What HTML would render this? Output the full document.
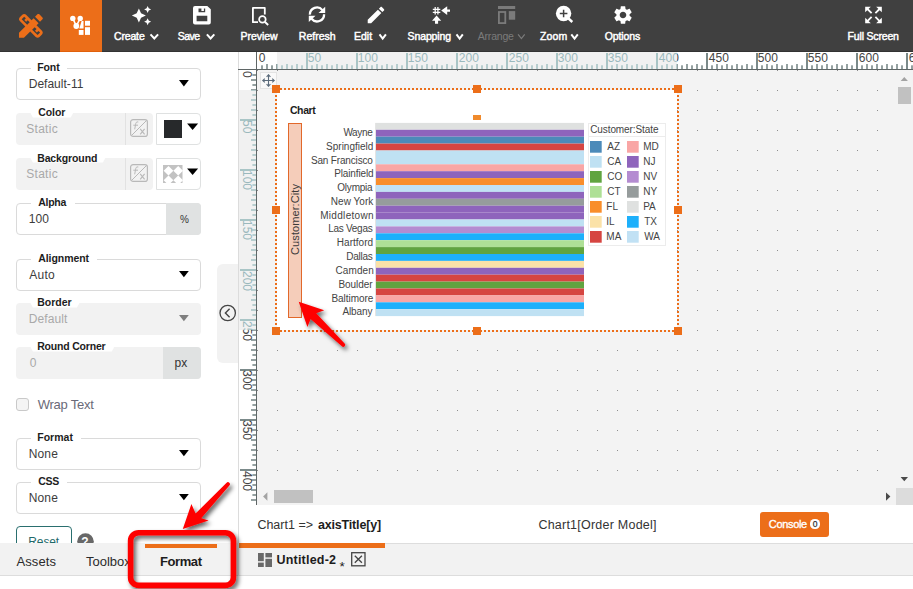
<!DOCTYPE html>
<html><head><meta charset="utf-8"><title>Format</title>
<style>
html,body{margin:0;padding:0;}
body{width:913px;height:589px;overflow:hidden;position:relative;background:#fff;font-family:"Liberation Sans", sans-serif;}
.t{position:absolute;white-space:pre;}
svg{position:absolute;overflow:visible;}
</style></head><body>
<div style="position:absolute;left:0px;top:0px;width:913px;height:51px;background:#404040;"></div>
<div style="position:absolute;left:60px;top:0px;width:42px;height:52px;background:#ec6e19;"></div>
<div style="position:absolute;left:0px;top:51px;width:238px;height:538px;background:#fff;"></div>
<div style="position:absolute;left:238px;top:51px;width:1px;height:493px;background:#dcdcdc;"></div>
<div style="position:absolute;left:239px;top:51px;width:674px;height:454px;background:#f3f3f3;"></div>
<div style="position:absolute;left:239px;top:505px;width:674px;height:38px;background:#fff;"></div>
<div style="position:absolute;left:0px;top:543px;width:913px;height:33px;background:#f2f2f2;"></div>
<div style="position:absolute;left:0px;top:575px;width:913px;height:1px;background:#dddddd;"></div>
<div style="position:absolute;left:239px;top:543px;width:674px;height:1px;background:#dddddd;"></div>
<div style="position:absolute;left:0px;top:576px;width:913px;height:13px;background:#fff;"></div>
<svg style="left:14.6px;top:10px" width="31.8" height="31.8" viewBox="0 0 24 24" ><path fill="#ec6e19" d="M16.24 11.51l1.57-1.57-3.75-3.75-1.57 1.57-4.14-4.13c-.78-.78-2.05-.78-2.83 0l-1.9 1.9c-.78.78-.78 2.05 0 2.83l4.13 4.13L3 17.25V21h3.75l4.76-4.76 4.13 4.13c.95.95 2.23.6 2.83 0l1.9-1.9c.78-.78.78-2.05 0-2.83l-4.13-4.13zm-7.06-.44L5.04 6.94l1.89-1.9L8.2 6.31 7.02 7.5l1.41 1.41 1.19-1.19 1.45 1.45-1.89 1.9zm7.88 7.89l-4.13-4.13 1.9-1.9 1.45 1.45-1.19 1.19 1.41 1.41 1.19-1.19 1.27 1.27-1.9 1.9zM20.71 7.04c.39-.39.39-1.02 0-1.41l-2.34-2.34c-.47-.47-1.12-.29-1.41 0l-1.83 1.83 3.75 3.75 1.83-1.83z"/></svg>
<svg style="left:60px;top:0px" width="42" height="52" viewBox="60 0 42 52" ><g fill="#fff" stroke="none">
<circle cx="72.8" cy="18.4" r="2.7"/><circle cx="80.2" cy="18.4" r="2.7"/><circle cx="76.3" cy="26" r="2.9"/>
<path d="M72.8 18.4 L76.3 26 L80.2 18.4" stroke="#fff" stroke-width="1.6" fill="none"/>
<rect x="85" y="20.8" width="5" height="4.9"/>
<rect x="85" y="27.2" width="5" height="7.7"/>
<rect x="78.8" y="30" width="4.7" height="4.9"/>
<path d="M81.6 21 h1.9 v7.6 h-4.2 z"/>
</g></svg>
<svg style="left:131.2px;top:4.6px" width="21" height="21" viewBox="0 0 24 24" ><path fill="#fff" d="M19 9l1.25-2.75L23 5l-2.75-1.25L19 1l-1.25 2.75L15 5l2.75 1.25L19 9zm-7.5.5L9 4 6.5 9.5 1 12l5.500 2.5L9 20l2.5-5.500L17 12l-5.500-2.500zM19 15l-1.250 2.750L15 19l2.750 1.250L19 23l1.250-2.750L23 19l-2.750-1.250L19 15z"/></svg>
<span class="t" style="left:114.00px;top:30px;font-size:10.5px;line-height:13px;color:#fff;letter-spacing:-0.160px;-webkit-text-stroke:0.45px #fff;">Create</span>
<svg style="left:0px;top:0px" width="913" height="52" viewBox="0 0 913 52" ><path d="M150.5 34.3 L154.3 38.5 L158.1 34.3" fill="none" stroke="#fff" stroke-width="2" stroke-linecap="butt"/></svg>
<svg style="left:192.7px;top:5.6px" width="17.8" height="18.4" viewBox="0 0 17.8 18.4" ><path fill="#fff" fill-rule="evenodd" d="M2 0 H14.3 L17.8 3.3 V16.4 Q17.8 18.4 15.8 18.4 H2 Q0 18.4 0 16.400 V2 Q0 0 2 0 Z M5.500 2.600 V6.200 H12.200 V2.600 H10.900 V5 H8.400 V2.600 Z M3.600 9.700 H14.300 V15.200 H3.600 Z"/></svg>
<span class="t" style="left:177.70px;top:30px;font-size:10.5px;line-height:13px;color:#fff;letter-spacing:-0.533px;-webkit-text-stroke:0.45px #fff;">Save</span>
<svg style="left:0px;top:0px" width="913" height="52" viewBox="0 0 913 52" ><path d="M206.9 34.3 L210.60000000000002 38.5 L214.3 34.3" fill="none" stroke="#fff" stroke-width="2" stroke-linecap="butt"/></svg>
<svg style="left:251.8px;top:6.8px" width="17" height="18.4" viewBox="0 0 17 18.4" ><path d="M6 15.2 H0.900 V0.900 H12.800 V7.500" fill="none" stroke="#fff" stroke-width="1.800" stroke-linejoin="round"/>
<circle cx="10.400" cy="12.400" r="3.300" fill="none" stroke="#fff" stroke-width="1.700"/>
<path d="M12.700 14.800 L16.200 18" stroke="#fff" stroke-width="1.900" fill="none"/></svg>
<span class="t" style="left:240.60px;top:30px;font-size:10.5px;line-height:13px;color:#fff;letter-spacing:-0.050px;-webkit-text-stroke:0.45px #fff;">Preview</span>
<svg style="left:302px;top:2px" width="30" height="26" viewBox="302 2 30 26" ><path d="M309.900 14.600 A7 7 0 0 1 322.400 10.100" fill="none" stroke="#fff" stroke-width="2.300"/><path d="M324.100 14.200 A7 7 0 0 1 311.600 18.700" fill="none" stroke="#fff" stroke-width="2.300"/><path fill="#fff" d="M325.200 6.700 V13 H318.500 Z M308.800 22.100 V15.800 H315.500 Z"/></svg>
<span class="t" style="left:298.80px;top:30px;font-size:10.5px;line-height:13px;color:#fff;letter-spacing:0.017px;-webkit-text-stroke:0.45px #fff;">Refresh</span>
<svg style="left:364.1px;top:2.9px" width="24" height="24" viewBox="0 0 24 24" ><path fill="#fff" transform="translate(12,12) scale(0.92) translate(-12,-12)" d="M3 17.250V21h3.750L17.810 9.940l-3.750-3.750L3 17.250zM20.710 7.040c.390-.390.390-1.020 0-1.410l-2.340-2.340c-.390-.390-1.020-.390-1.410 0l-1.830 1.830 3.750 3.750 1.830-1.830z"/></svg>
<span class="t" style="left:353.90px;top:30px;font-size:10.5px;line-height:13px;color:#fff;letter-spacing:0.033px;-webkit-text-stroke:0.45px #fff;">Edit</span>
<svg style="left:0px;top:0px" width="913" height="52" viewBox="0 0 913 52" ><path d="M379.5 34.3 L382.7 38.5 L385.9 34.3" fill="none" stroke="#fff" stroke-width="2" stroke-linecap="butt"/></svg>
<svg style="left:426px;top:0px" width="30" height="30" viewBox="426 0 30 30" ><path d="M435.200 6.900 V14.400 M437.900 6.900 V14.400 M432.800 9.400 H440.300 M432.800 12.400 H440.300" stroke="#fff" stroke-width="1.250" fill="none"/>
<path fill="#fff" d="M441.200 10.600 L447.200 6.200 V9.600 H450 V11.800 H447.200 V15 Z"/>
<path fill="#fff" d="M436.600 15.500 L441.200 20.700 H438.100 V23.800 H435 V20.700 H432 Z"/></svg>
<span class="t" style="left:407.50px;top:30px;font-size:10.5px;line-height:13px;color:#fff;letter-spacing:-0.100px;-webkit-text-stroke:0.45px #fff;">Snapping</span>
<svg style="left:0px;top:0px" width="913" height="52" viewBox="0 0 913 52" ><path d="M456.5 34.3 L459.65 38.5 L462.8 34.3" fill="none" stroke="#fff" stroke-width="2" stroke-linecap="butt"/></svg>
<svg style="left:497.9px;top:5.9px" width="17.2" height="18" viewBox="0 0 17.2 18" ><rect x="0" y="0" width="17.200" height="3" fill="#7b7b7b"/><rect x="0.900" y="6" width="6.400" height="11.100" fill="none" stroke="#7b7b7b" stroke-width="1.800"/><rect x="10.800" y="5.100" width="6.400" height="8.600" fill="#7b7b7b"/></svg>
<span class="t" style="left:477.70px;top:30px;font-size:10.5px;line-height:13px;color:#7b7b7b;letter-spacing:-0.183px;">Arrange</span>
<svg style="left:0px;top:0px" width="913" height="52" viewBox="0 0 913 52" ><path d="M518.1 34.3 L521.4000000000001 38.5 L524.7 34.3" fill="none" stroke="#7b7b7b" stroke-width="1.2" stroke-linecap="butt"/></svg>
<svg style="left:555px;top:5px" width="19" height="19" viewBox="555 5 19 19" ><circle cx="563.600" cy="13.500" r="7.700" fill="#fff"/><path d="M568.500 18.500 L572.300 22" stroke="#fff" stroke-width="2.400" fill="none"/>
<path d="M559.800 13.500 H567.400 M563.600 9.700 V17.300" stroke="#404040" stroke-width="1.500" fill="none"/></svg>
<span class="t" style="left:539.90px;top:30px;font-size:10.5px;line-height:13px;color:#fff;letter-spacing:0.200px;-webkit-text-stroke:0.45px #fff;">Zoom</span>
<svg style="left:0px;top:0px" width="913" height="52" viewBox="0 0 913 52" ><path d="M571.3 34.3 L574.55 38.5 L577.8 34.3" fill="none" stroke="#fff" stroke-width="2" stroke-linecap="butt"/></svg>
<svg style="left:610.5px;top:2.9px" width="24" height="24" viewBox="0 0 24 24" ><path fill="#fff" transform="translate(12,12) scale(0.92) translate(-12,-12)" d="M19.140 12.940c.040-.300.060-.610.060-.940 0-.320-.020-.640-.070-.940l2.030-1.580c.180-.140.230-.410.120-.610l-1.920-3.320c-.120-.220-.370-.290-.590-.220l-2.390.960c-.500-.380-1.030-.700-1.620-.940l-.360-2.540c-.040-.240-.240-.410-.480-.410h-3.840c-.240 0-.430.170-.470.410l-.360 2.540c-.590.240-1.130.570-1.620.940l-2.390-.960c-.220-.080-.470 0-.590.220L2.740 8.870c-.120.210-.080.470.120.610l2.030 1.580c-.050.300-.090.630-.090.940s.020.640.070.940l-2.030 1.580c-.180.140-.230.410-.120.610l1.920 3.320c.120.220.370.290.590.220l2.390-.960c.500.380 1.030.700 1.620.940l.360 2.540c.050.240.240.410.480.410h3.840c.240 0 .440-.170.470-.410l.360-2.540c.590-.240 1.130-.560 1.620-.940l2.390.960c.220.080.470 0 .590-.220l1.920-3.320c.120-.220.070-.470-.120-.610l-2.010-1.580zM12 15.600c-1.980 0-3.600-1.620-3.600-3.600s1.620-3.600 3.600-3.600 3.600 1.620 3.600 3.600-1.620 3.600-3.600 3.600z"/></svg>
<span class="t" style="left:604.70px;top:30px;font-size:10.5px;line-height:13px;color:#fff;letter-spacing:-0.117px;-webkit-text-stroke:0.45px #fff;">Options</span>
<svg style="left:0px;top:0px" width="913" height="52" viewBox="0 0 913 52" ><path fill="#fff" d="M865.1999999999999 6.750000000000002 L870.8 6.750000000000002 L865.1999999999999 12.350000000000001 Z"/><path d="M871.5999999999999 13.150000000000002 L867.1999999999999 8.750000000000002" stroke="#fff" stroke-width="1.800" fill="none"/><path fill="#fff" d="M881.8000000000001 6.750000000000002 L876.2 6.750000000000002 L881.8000000000001 12.350000000000001 Z"/><path d="M875.4000000000001 13.150000000000002 L879.8000000000001 8.750000000000002" stroke="#fff" stroke-width="1.800" fill="none"/><path fill="#fff" d="M865.1999999999999 23.35 L870.8 23.35 L865.1999999999999 17.75 Z"/><path d="M871.5999999999999 16.95 L867.1999999999999 21.35" stroke="#fff" stroke-width="1.800" fill="none"/><path fill="#fff" d="M881.8000000000001 23.35 L876.2 23.35 L881.8000000000001 17.75 Z"/><path d="M875.4000000000001 16.95 L879.8000000000001 21.35" stroke="#fff" stroke-width="1.800" fill="none"/></svg>
<span class="t" style="left:847.60px;top:30px;font-size:10.5px;line-height:13px;color:#fff;letter-spacing:-0.180px;-webkit-text-stroke:0.45px #fff;">Full Screen</span>
<div style="position:absolute;left:0px;top:51px;width:913px;height:1px;background:#333333;"></div>
<div style="position:absolute;left:60px;top:51px;width:42px;height:1px;background:#e0600c;"></div>
<div style="position:absolute;left:16px;top:68px;width:183px;height:30px;background:#fff;border:1px solid #dadada;border-radius:4px;"></div>
<div style="position:absolute;left:31.4px;top:67px;width:35.6px;height:3px;background:#fff;"></div>
<span class="t" style="left:37.20px;top:61px;font-size:10.5px;line-height:13px;color:#1d1d1d;font-weight:700;letter-spacing:-0.100px;">Font</span>
<span class="t" style="left:28.70px;top:77px;font-size:12px;line-height:14px;color:#3c3c3c;letter-spacing:0.022px;">Default-11</span>
<svg style="left:0px;top:0px" width="913" height="589" viewBox="0 0 913 589" ><path fill="#000" d="M179 80 H188.8 L183.9 86.4 Z"/></svg>
<div style="position:absolute;left:16px;top:113px;width:137px;height:32px;background:#f2f2f2;border-radius:4px;"></div>
<div style="position:absolute;left:125px;top:113px;width:1px;height:32px;background:#e2e2e2;"></div>
<svg style="left:0px;top:0px" width="913" height="589" viewBox="0 0 913 589" ><path fill="#fff" d="M29.9 112 H73.7 L70.7 117.6 H32.9 Z"/></svg>
<span class="t" style="left:38.20px;top:106px;font-size:10.5px;line-height:13px;color:#1d1d1d;font-weight:700;letter-spacing:-0.075px;">Color</span>
<span class="t" style="left:26.20px;top:122px;font-size:12px;line-height:14px;color:#a9a9a9;letter-spacing:0.300px;">Static</span>
<svg style="left:130px;top:119.3px" width="18" height="18" viewBox="0 0 18 18" ><rect x="0.600" y="0.600" width="16.800" height="16.800" rx="2.500" fill="none" stroke="#b9b9b9" stroke-width="1.200"/>
<path d="M1.500 16.500 L16.500 1.500" stroke="#b9b9b9" stroke-width="1" fill="none"/>
<path d="M8.300 3 C6.300 2.400 5.800 3.800 5.500 5.800 L4.700 10.300 M3.300 6.200 H8" stroke="#b9b9b9" stroke-width="1" fill="none"/>
<path d="M10.200 9.800 L14.600 15.300 M14.600 9.800 L10.200 15.300" stroke="#b9b9b9" stroke-width="1.100" fill="none"/></svg>
<div style="position:absolute;left:156px;top:113px;width:43px;height:30px;background:#fff;border:1px solid #dfe1e1;border-radius:0 4px 4px 0;"></div>
<div style="position:absolute;left:164px;top:120px;width:18px;height:18px;background:#27292b;"></div>
<svg style="left:0px;top:0px" width="913" height="589" viewBox="0 0 913 589" ><path fill="#000" d="M187.1 123.4 H198.1 L192.6 130 Z"/></svg>
<div style="position:absolute;left:16px;top:158px;width:137px;height:32px;background:#f2f2f2;border-radius:4px;"></div>
<div style="position:absolute;left:125px;top:158px;width:1px;height:32px;background:#e2e2e2;"></div>
<svg style="left:0px;top:0px" width="913" height="589" viewBox="0 0 913 589" ><path fill="#fff" d="M29.9 157 H105.9 L102.9 162.6 H32.9 Z"/></svg>
<span class="t" style="left:37.20px;top:152px;font-size:10.5px;line-height:13px;color:#1d1d1d;font-weight:700;letter-spacing:-0.122px;">Background</span>
<span class="t" style="left:26.20px;top:167px;font-size:12px;line-height:14px;color:#a9a9a9;letter-spacing:0.300px;">Static</span>
<svg style="left:130px;top:164.3px" width="18" height="18" viewBox="0 0 18 18" ><rect x="0.600" y="0.600" width="16.800" height="16.800" rx="2.500" fill="none" stroke="#b9b9b9" stroke-width="1.200"/>
<path d="M1.500 16.500 L16.500 1.500" stroke="#b9b9b9" stroke-width="1" fill="none"/>
<path d="M8.300 3 C6.300 2.400 5.800 3.800 5.500 5.800 L4.700 10.300 M3.300 6.200 H8" stroke="#b9b9b9" stroke-width="1" fill="none"/>
<path d="M10.200 9.800 L14.600 15.300 M14.600 9.800 L10.200 15.300" stroke="#b9b9b9" stroke-width="1.100" fill="none"/></svg>
<div style="position:absolute;left:156px;top:158px;width:43px;height:30px;background:#fff;border:1px solid #dfe1e1;border-radius:0 4px 4px 0;"></div>
<svg style="left:163.2px;top:165.2px;overflow:hidden" width="19.500" height="18.300" viewBox="0 0 19.500 18.300"><rect width="19.500" height="18.300" fill="#c2c2c2"/><path fill="#fff" d="M5.5 1.0499999999999998 L10.35 5.8 L5.5 10.55 L0.6500000000000004 5.8 Z M15.2 1.0499999999999998 L20.049999999999997 5.8 L15.2 10.55 L10.35 5.8 Z M5.5 10.55 L10.35 15.3 L5.5 20.05 L0.6500000000000004 15.3 Z M15.2 10.55 L20.049999999999997 15.3 L15.2 20.05 L10.35 15.3 Z "/></svg>
<svg style="left:0px;top:0px" width="913" height="589" viewBox="0 0 913 589" ><path fill="#000" d="M187.1 168.4 H198.1 L192.6 175 Z"/></svg>
<div style="position:absolute;left:16px;top:203px;width:183px;height:30px;background:#fff;border:1px solid #dadada;border-radius:4px;"></div>
<div style="position:absolute;left:31.4px;top:202px;width:43.300000000000004px;height:3px;background:#fff;"></div>
<span class="t" style="left:38.20px;top:196px;font-size:10.5px;line-height:13px;color:#1d1d1d;font-weight:700;letter-spacing:-0.250px;">Alpha</span>
<div style="position:absolute;left:166px;top:203px;width:35px;height:32px;background:#e0e2e2;border-radius:0 4px 4px 0;"></div>
<span class="t" style="left:28.70px;top:212px;font-size:12px;line-height:14px;color:#3c3c3c;letter-spacing:0.100px;">100</span>
<span class="t" style="left:180.00px;top:214px;font-size:10px;line-height:12px;color:#333;">%</span>
<div style="position:absolute;left:16px;top:259px;width:183px;height:30px;background:#fff;border:1px solid #dadada;border-radius:4px;"></div>
<div style="position:absolute;left:31.4px;top:258px;width:65.69999999999999px;height:3px;background:#fff;"></div>
<span class="t" style="left:38.20px;top:252px;font-size:10.5px;line-height:13px;color:#1d1d1d;font-weight:700;letter-spacing:-0.050px;">Alignment</span>
<span class="t" style="left:29.20px;top:268px;font-size:12px;line-height:14px;color:#3c3c3c;letter-spacing:0.267px;">Auto</span>
<svg style="left:0px;top:0px" width="913" height="589" viewBox="0 0 913 589" ><path fill="#000" d="M179 271 H188.8 L183.9 277.3 Z"/></svg>
<div style="position:absolute;left:16px;top:303px;width:185px;height:32px;background:#f2f2f2;border-radius:4px;"></div>
<svg style="left:0px;top:0px" width="913" height="589" viewBox="0 0 913 589" ><path fill="#fff" d="M29.9 302 H80.0 L77.0 307.6 H32.9 Z"/></svg>
<span class="t" style="left:37.20px;top:296px;font-size:10.5px;line-height:13px;color:#1d1d1d;font-weight:700;letter-spacing:0.020px;">Border</span>
<span class="t" style="left:28.70px;top:312px;font-size:12px;line-height:14px;color:#a9a9a9;letter-spacing:0.117px;">Default</span>
<svg style="left:0px;top:0px" width="913" height="589" viewBox="0 0 913 589" ><path fill="#7f7f7f" d="M179 315 H188.8 L183.9 321.3 Z"/></svg>
<div style="position:absolute;left:16px;top:347px;width:185px;height:32px;background:#f2f2f2;border-radius:4px;"></div>
<svg style="left:0px;top:0px" width="913" height="589" viewBox="0 0 913 589" ><path fill="#fff" d="M29.9 346 H114.8 L111.8 351.6 H32.9 Z"/></svg>
<span class="t" style="left:37.20px;top:340px;font-size:10.5px;line-height:13px;color:#1d1d1d;font-weight:700;letter-spacing:-0.191px;">Round Corner</span>
<div style="position:absolute;left:163px;top:347px;width:38px;height:32px;background:#e0e2e2;border-radius:0 4px 4px 0;"></div>
<span class="t" style="left:29.70px;top:356px;font-size:12px;line-height:14px;color:#a9a9a9;">0</span>
<span class="t" style="left:174.50px;top:356px;font-size:12px;line-height:14px;color:#333;">px</span>
<div style="position:absolute;left:16px;top:398px;width:10.5px;height:10.5px;background:#f4f4f4;border:1px solid #c9c9c9;border-radius:3px;"></div>
<span class="t" style="left:37.70px;top:397px;font-size:13px;line-height:15px;color:#6a6a78;letter-spacing:-0.225px;">Wrap Text</span>
<div style="position:absolute;left:16px;top:438px;width:183px;height:30px;background:#fff;border:1px solid #dadada;border-radius:4px;"></div>
<div style="position:absolute;left:31.4px;top:437px;width:49.6px;height:3px;background:#fff;"></div>
<span class="t" style="left:37.20px;top:431px;font-size:10.5px;line-height:13px;color:#1d1d1d;font-weight:700;letter-spacing:0.040px;">Format</span>
<span class="t" style="left:28.70px;top:447px;font-size:12px;line-height:14px;color:#3c3c3c;letter-spacing:0.167px;">None</span>
<svg style="left:0px;top:0px" width="913" height="589" viewBox="0 0 913 589" ><path fill="#000" d="M179 450 H188.8 L183.9 456.3 Z"/></svg>
<div style="position:absolute;left:16px;top:482px;width:183px;height:30px;background:#fff;border:1px solid #dadada;border-radius:4px;"></div>
<div style="position:absolute;left:31.4px;top:481px;width:35.300000000000004px;height:3px;background:#fff;"></div>
<span class="t" style="left:38.20px;top:475px;font-size:10.5px;line-height:13px;color:#1d1d1d;font-weight:700;letter-spacing:-0.300px;">CSS</span>
<span class="t" style="left:28.70px;top:491px;font-size:12px;line-height:14px;color:#3c3c3c;letter-spacing:0.167px;">None</span>
<svg style="left:0px;top:0px" width="913" height="589" viewBox="0 0 913 589" ><path fill="#000" d="M179 494 H188.8 L183.9 500.3 Z"/></svg>
<div style="position:absolute;left:16px;top:526px;width:54px;height:30px;background:#fff;border:1px solid #2a6f6f;border-radius:4px;"></div>
<span class="t" style="left:28.30px;top:535px;font-size:12px;line-height:14px;color:#1f6a6a;letter-spacing:-0.125px;">Reset</span>
<svg style="left:77px;top:532.5px" width="17" height="17" viewBox="0 0 17 17" ><circle cx="8.500" cy="8.500" r="8.300" fill="#686868"/></svg>
<span class="t" style="left:81.20px;top:535px;font-size:12px;line-height:14px;color:#fff;font-weight:700;">?</span>
<div style="position:absolute;left:217px;top:264px;width:21px;height:99px;background:#f2f2f2;border-radius:6px 0 0 6px;"></div>
<svg style="left:217px;top:300px" width="24" height="26" viewBox="217 300 24 26" ><circle cx="227.700" cy="313" r="7.700" fill="none" stroke="#444" stroke-width="1.300"/><path d="M229.600 308.800 L225.400 313 L229.600 317.200" fill="none" stroke="#444" stroke-width="1.400"/></svg>
<div style="position:absolute;left:0px;top:543px;width:238px;height:33px;background:#f2f2f2;"></div>
<div style="position:absolute;left:0px;top:575px;width:239px;height:1px;background:#dddddd;"></div>
<div style="position:absolute;left:238px;top:543px;width:1px;height:33px;background:#e4e4e4;"></div>
<span class="t" style="left:16.50px;top:554px;font-size:13px;line-height:15px;color:#2b2b2b;letter-spacing:0.080px;">Assets</span>
<span class="t" style="left:86.00px;top:554px;font-size:13px;line-height:15px;color:#2b2b2b;">Toolbox</span>
<div style="position:absolute;left:145px;top:544px;width:72px;height:4px;background:#ec6e19;"></div>
<span class="t" style="left:160.00px;top:554px;font-size:13px;line-height:15px;color:#1d1d1d;font-weight:700;letter-spacing:-0.420px;">Format</span>
<div style="position:absolute;left:239px;top:52px;width:674px;height:17px;background:#fff;"></div>
<div style="position:absolute;left:239px;top:70px;width:17px;height:435px;background:#fff;"></div>
<svg style="left:0px;top:0px" width="913" height="589" viewBox="0 0 913 589" ><rect x="261.2" y="65.300" width="1.600" height="3.700" fill="#7b8a8a"/><rect x="266.2" y="64" width="1.600" height="5" fill="#7b8a8a"/><rect x="271.2" y="65.300" width="1.600" height="3.700" fill="#7b8a8a"/><rect x="276.2" y="64" width="1.600" height="5" fill="#7b8a8a"/><rect x="281.2" y="65.300" width="1.600" height="3.700" fill="#7b8a8a"/><rect x="286.2" y="64" width="1.600" height="5" fill="#7b8a8a"/><rect x="291.2" y="65.300" width="1.600" height="3.700" fill="#7b8a8a"/><rect x="296.2" y="64" width="1.600" height="5" fill="#7b8a8a"/><rect x="301.2" y="65.300" width="1.600" height="3.700" fill="#7b8a8a"/><rect x="306" y="53" width="2" height="16" fill="#7b8a8a"/><rect x="311.2" y="65.300" width="1.600" height="3.700" fill="#7b8a8a"/><rect x="316.2" y="64" width="1.600" height="5" fill="#7b8a8a"/><rect x="321.2" y="65.300" width="1.600" height="3.700" fill="#7b8a8a"/><rect x="326.2" y="64" width="1.600" height="5" fill="#7b8a8a"/><rect x="331.2" y="65.300" width="1.600" height="3.700" fill="#7b8a8a"/><rect x="336.2" y="64" width="1.600" height="5" fill="#7b8a8a"/><rect x="341.2" y="65.300" width="1.600" height="3.700" fill="#7b8a8a"/><rect x="346.2" y="64" width="1.600" height="5" fill="#7b8a8a"/><rect x="351.2" y="65.300" width="1.600" height="3.700" fill="#7b8a8a"/><rect x="356" y="53" width="2" height="16" fill="#7b8a8a"/><rect x="361.2" y="65.300" width="1.600" height="3.700" fill="#7b8a8a"/><rect x="366.2" y="64" width="1.600" height="5" fill="#7b8a8a"/><rect x="371.2" y="65.300" width="1.600" height="3.700" fill="#7b8a8a"/><rect x="376.2" y="64" width="1.600" height="5" fill="#7b8a8a"/><rect x="381.2" y="65.300" width="1.600" height="3.700" fill="#7b8a8a"/><rect x="386.2" y="64" width="1.600" height="5" fill="#7b8a8a"/><rect x="391.2" y="65.300" width="1.600" height="3.700" fill="#7b8a8a"/><rect x="396.2" y="64" width="1.600" height="5" fill="#7b8a8a"/><rect x="401.2" y="65.300" width="1.600" height="3.700" fill="#7b8a8a"/><rect x="406" y="53" width="2" height="16" fill="#7b8a8a"/><rect x="411.2" y="65.300" width="1.600" height="3.700" fill="#7b8a8a"/><rect x="416.2" y="64" width="1.600" height="5" fill="#7b8a8a"/><rect x="421.2" y="65.300" width="1.600" height="3.700" fill="#7b8a8a"/><rect x="426.2" y="64" width="1.600" height="5" fill="#7b8a8a"/><rect x="431.2" y="65.300" width="1.600" height="3.700" fill="#7b8a8a"/><rect x="436.2" y="64" width="1.600" height="5" fill="#7b8a8a"/><rect x="441.2" y="65.300" width="1.600" height="3.700" fill="#7b8a8a"/><rect x="446.2" y="64" width="1.600" height="5" fill="#7b8a8a"/><rect x="451.2" y="65.300" width="1.600" height="3.700" fill="#7b8a8a"/><rect x="456" y="53" width="2" height="16" fill="#7b8a8a"/><rect x="461.2" y="65.300" width="1.600" height="3.700" fill="#7b8a8a"/><rect x="466.2" y="64" width="1.600" height="5" fill="#7b8a8a"/><rect x="471.2" y="65.300" width="1.600" height="3.700" fill="#7b8a8a"/><rect x="476.2" y="64" width="1.600" height="5" fill="#7b8a8a"/><rect x="481.2" y="65.300" width="1.600" height="3.700" fill="#7b8a8a"/><rect x="486.2" y="64" width="1.600" height="5" fill="#7b8a8a"/><rect x="491.2" y="65.300" width="1.600" height="3.700" fill="#7b8a8a"/><rect x="496.2" y="64" width="1.600" height="5" fill="#7b8a8a"/><rect x="501.2" y="65.300" width="1.600" height="3.700" fill="#7b8a8a"/><rect x="506" y="53" width="2" height="16" fill="#7b8a8a"/><rect x="511.2" y="65.300" width="1.600" height="3.700" fill="#7b8a8a"/><rect x="516.2" y="64" width="1.600" height="5" fill="#7b8a8a"/><rect x="521.2" y="65.300" width="1.600" height="3.700" fill="#7b8a8a"/><rect x="526.2" y="64" width="1.600" height="5" fill="#7b8a8a"/><rect x="531.2" y="65.300" width="1.600" height="3.700" fill="#7b8a8a"/><rect x="536.2" y="64" width="1.600" height="5" fill="#7b8a8a"/><rect x="541.2" y="65.300" width="1.600" height="3.700" fill="#7b8a8a"/><rect x="546.2" y="64" width="1.600" height="5" fill="#7b8a8a"/><rect x="551.2" y="65.300" width="1.600" height="3.700" fill="#7b8a8a"/><rect x="556" y="53" width="2" height="16" fill="#7b8a8a"/><rect x="561.2" y="65.300" width="1.600" height="3.700" fill="#7b8a8a"/><rect x="566.2" y="64" width="1.600" height="5" fill="#7b8a8a"/><rect x="571.2" y="65.300" width="1.600" height="3.700" fill="#7b8a8a"/><rect x="576.2" y="64" width="1.600" height="5" fill="#7b8a8a"/><rect x="581.2" y="65.300" width="1.600" height="3.700" fill="#7b8a8a"/><rect x="586.2" y="64" width="1.600" height="5" fill="#7b8a8a"/><rect x="591.2" y="65.300" width="1.600" height="3.700" fill="#7b8a8a"/><rect x="596.2" y="64" width="1.600" height="5" fill="#7b8a8a"/><rect x="601.2" y="65.300" width="1.600" height="3.700" fill="#7b8a8a"/><rect x="606" y="53" width="2" height="16" fill="#7b8a8a"/><rect x="611.2" y="65.300" width="1.600" height="3.700" fill="#7b8a8a"/><rect x="616.2" y="64" width="1.600" height="5" fill="#7b8a8a"/><rect x="621.2" y="65.300" width="1.600" height="3.700" fill="#7b8a8a"/><rect x="626.2" y="64" width="1.600" height="5" fill="#7b8a8a"/><rect x="631.2" y="65.300" width="1.600" height="3.700" fill="#7b8a8a"/><rect x="636.2" y="64" width="1.600" height="5" fill="#7b8a8a"/><rect x="641.2" y="65.300" width="1.600" height="3.700" fill="#7b8a8a"/><rect x="646.2" y="64" width="1.600" height="5" fill="#7b8a8a"/><rect x="651.2" y="65.300" width="1.600" height="3.700" fill="#7b8a8a"/><rect x="656" y="53" width="2" height="16" fill="#7b8a8a"/><rect x="661.2" y="65.300" width="1.600" height="3.700" fill="#7b8a8a"/><rect x="666.2" y="64" width="1.600" height="5" fill="#7b8a8a"/><rect x="671.2" y="65.300" width="1.600" height="3.700" fill="#7b8a8a"/><rect x="676.2" y="64" width="1.600" height="5" fill="#7b8a8a"/><rect x="681.2" y="65.300" width="1.600" height="3.700" fill="#7b8a8a"/><rect x="686.2" y="64" width="1.600" height="5" fill="#7b8a8a"/><rect x="691.2" y="65.300" width="1.600" height="3.700" fill="#7b8a8a"/><rect x="696.2" y="64" width="1.600" height="5" fill="#7b8a8a"/><rect x="701.2" y="65.300" width="1.600" height="3.700" fill="#7b8a8a"/><rect x="706" y="53" width="2" height="16" fill="#7b8a8a"/><rect x="711.2" y="65.300" width="1.600" height="3.700" fill="#7b8a8a"/><rect x="716.2" y="64" width="1.600" height="5" fill="#7b8a8a"/><rect x="721.2" y="65.300" width="1.600" height="3.700" fill="#7b8a8a"/><rect x="726.2" y="64" width="1.600" height="5" fill="#7b8a8a"/><rect x="731.2" y="65.300" width="1.600" height="3.700" fill="#7b8a8a"/><rect x="736.2" y="64" width="1.600" height="5" fill="#7b8a8a"/><rect x="741.2" y="65.300" width="1.600" height="3.700" fill="#7b8a8a"/><rect x="746.2" y="64" width="1.600" height="5" fill="#7b8a8a"/><rect x="751.2" y="65.300" width="1.600" height="3.700" fill="#7b8a8a"/><rect x="756" y="53" width="2" height="16" fill="#7b8a8a"/><rect x="761.2" y="65.300" width="1.600" height="3.700" fill="#7b8a8a"/><rect x="766.2" y="64" width="1.600" height="5" fill="#7b8a8a"/><rect x="771.2" y="65.300" width="1.600" height="3.700" fill="#7b8a8a"/><rect x="776.2" y="64" width="1.600" height="5" fill="#7b8a8a"/><rect x="781.2" y="65.300" width="1.600" height="3.700" fill="#7b8a8a"/><rect x="786.2" y="64" width="1.600" height="5" fill="#7b8a8a"/><rect x="791.2" y="65.300" width="1.600" height="3.700" fill="#7b8a8a"/><rect x="796.2" y="64" width="1.600" height="5" fill="#7b8a8a"/><rect x="801.2" y="65.300" width="1.600" height="3.700" fill="#7b8a8a"/><rect x="806" y="53" width="2" height="16" fill="#7b8a8a"/><rect x="811.2" y="65.300" width="1.600" height="3.700" fill="#7b8a8a"/><rect x="816.2" y="64" width="1.600" height="5" fill="#7b8a8a"/><rect x="821.2" y="65.300" width="1.600" height="3.700" fill="#7b8a8a"/><rect x="826.2" y="64" width="1.600" height="5" fill="#7b8a8a"/><rect x="831.2" y="65.300" width="1.600" height="3.700" fill="#7b8a8a"/><rect x="836.2" y="64" width="1.600" height="5" fill="#7b8a8a"/><rect x="841.2" y="65.300" width="1.600" height="3.700" fill="#7b8a8a"/><rect x="846.2" y="64" width="1.600" height="5" fill="#7b8a8a"/><rect x="851.2" y="65.300" width="1.600" height="3.700" fill="#7b8a8a"/><rect x="856" y="53" width="2" height="16" fill="#7b8a8a"/><rect x="861.2" y="65.300" width="1.600" height="3.700" fill="#7b8a8a"/><rect x="866.2" y="64" width="1.600" height="5" fill="#7b8a8a"/><rect x="871.2" y="65.300" width="1.600" height="3.700" fill="#7b8a8a"/><rect x="876.2" y="64" width="1.600" height="5" fill="#7b8a8a"/><rect x="881.2" y="65.300" width="1.600" height="3.700" fill="#7b8a8a"/><rect x="886.2" y="64" width="1.600" height="5" fill="#7b8a8a"/><rect x="891.2" y="65.300" width="1.600" height="3.700" fill="#7b8a8a"/><rect x="896.2" y="64" width="1.600" height="5" fill="#7b8a8a"/><rect x="901.2" y="65.300" width="1.600" height="3.700" fill="#7b8a8a"/><rect x="906" y="53" width="2" height="16" fill="#7b8a8a"/><rect x="911.2" y="65.300" width="1.600" height="3.700" fill="#7b8a8a"/></svg>
<span class="t" style="left:258.70px;top:51px;font-size:12px;line-height:14px;color:#454545;">0</span>
<span class="t" style="left:307.80px;top:51px;font-size:12px;line-height:14px;color:#454545;">50</span>
<span class="t" style="left:357.80px;top:51px;font-size:12px;line-height:14px;color:#454545;">100</span>
<span class="t" style="left:407.80px;top:51px;font-size:12px;line-height:14px;color:#454545;">150</span>
<span class="t" style="left:458.80px;top:51px;font-size:12px;line-height:14px;color:#454545;">200</span>
<span class="t" style="left:508.80px;top:51px;font-size:12px;line-height:14px;color:#454545;">250</span>
<span class="t" style="left:557.80px;top:51px;font-size:12px;line-height:14px;color:#454545;">300</span>
<span class="t" style="left:607.80px;top:51px;font-size:12px;line-height:14px;color:#454545;">350</span>
<span class="t" style="left:658.80px;top:51px;font-size:12px;line-height:14px;color:#454545;">400</span>
<span class="t" style="left:708.80px;top:51px;font-size:12px;line-height:14px;color:#454545;">450</span>
<span class="t" style="left:757.80px;top:51px;font-size:12px;line-height:14px;color:#454545;">500</span>
<span class="t" style="left:807.80px;top:51px;font-size:12px;line-height:14px;color:#454545;">550</span>
<span class="t" style="left:858.80px;top:51px;font-size:12px;line-height:14px;color:#454545;">600</span>
<span class="t" style="left:908.80px;top:51px;font-size:12px;line-height:14px;color:#454545;">650</span>
<svg style="left:0px;top:0px" width="913" height="589" viewBox="0 0 913 589" ><rect x="252.400" y="74.2" width="3.600" height="1.600" fill="#7b8a8a"/><rect x="251" y="79.2" width="5" height="1.600" fill="#7b8a8a"/><rect x="252.400" y="84.2" width="3.600" height="1.600" fill="#7b8a8a"/><rect x="251" y="89.2" width="5" height="1.600" fill="#7b8a8a"/><rect x="252.400" y="94.2" width="3.600" height="1.600" fill="#7b8a8a"/><rect x="251" y="99.2" width="5" height="1.600" fill="#7b8a8a"/><rect x="252.400" y="104.2" width="3.600" height="1.600" fill="#7b8a8a"/><rect x="251" y="109.2" width="5" height="1.600" fill="#7b8a8a"/><rect x="252.400" y="114.2" width="3.600" height="1.600" fill="#7b8a8a"/><rect x="240" y="119" width="16" height="2" fill="#7b8a8a"/><rect x="252.400" y="124.2" width="3.600" height="1.600" fill="#7b8a8a"/><rect x="251" y="129.2" width="5" height="1.600" fill="#7b8a8a"/><rect x="252.400" y="134.2" width="3.600" height="1.600" fill="#7b8a8a"/><rect x="251" y="139.2" width="5" height="1.600" fill="#7b8a8a"/><rect x="252.400" y="144.2" width="3.600" height="1.600" fill="#7b8a8a"/><rect x="251" y="149.2" width="5" height="1.600" fill="#7b8a8a"/><rect x="252.400" y="154.2" width="3.600" height="1.600" fill="#7b8a8a"/><rect x="251" y="159.2" width="5" height="1.600" fill="#7b8a8a"/><rect x="252.400" y="164.2" width="3.600" height="1.600" fill="#7b8a8a"/><rect x="240" y="169" width="16" height="2" fill="#7b8a8a"/><rect x="252.400" y="174.2" width="3.600" height="1.600" fill="#7b8a8a"/><rect x="251" y="179.2" width="5" height="1.600" fill="#7b8a8a"/><rect x="252.400" y="184.2" width="3.600" height="1.600" fill="#7b8a8a"/><rect x="251" y="189.2" width="5" height="1.600" fill="#7b8a8a"/><rect x="252.400" y="194.2" width="3.600" height="1.600" fill="#7b8a8a"/><rect x="251" y="199.2" width="5" height="1.600" fill="#7b8a8a"/><rect x="252.400" y="204.2" width="3.600" height="1.600" fill="#7b8a8a"/><rect x="251" y="209.2" width="5" height="1.600" fill="#7b8a8a"/><rect x="252.400" y="214.2" width="3.600" height="1.600" fill="#7b8a8a"/><rect x="240" y="219" width="16" height="2" fill="#7b8a8a"/><rect x="252.400" y="224.2" width="3.600" height="1.600" fill="#7b8a8a"/><rect x="251" y="229.2" width="5" height="1.600" fill="#7b8a8a"/><rect x="252.400" y="234.2" width="3.600" height="1.600" fill="#7b8a8a"/><rect x="251" y="239.2" width="5" height="1.600" fill="#7b8a8a"/><rect x="252.400" y="244.2" width="3.600" height="1.600" fill="#7b8a8a"/><rect x="251" y="249.2" width="5" height="1.600" fill="#7b8a8a"/><rect x="252.400" y="254.2" width="3.600" height="1.600" fill="#7b8a8a"/><rect x="251" y="259.2" width="5" height="1.600" fill="#7b8a8a"/><rect x="252.400" y="264.2" width="3.600" height="1.600" fill="#7b8a8a"/><rect x="240" y="269" width="16" height="2" fill="#7b8a8a"/><rect x="252.400" y="274.2" width="3.600" height="1.600" fill="#7b8a8a"/><rect x="251" y="279.2" width="5" height="1.600" fill="#7b8a8a"/><rect x="252.400" y="284.2" width="3.600" height="1.600" fill="#7b8a8a"/><rect x="251" y="289.2" width="5" height="1.600" fill="#7b8a8a"/><rect x="252.400" y="294.2" width="3.600" height="1.600" fill="#7b8a8a"/><rect x="251" y="299.2" width="5" height="1.600" fill="#7b8a8a"/><rect x="252.400" y="304.2" width="3.600" height="1.600" fill="#7b8a8a"/><rect x="251" y="309.2" width="5" height="1.600" fill="#7b8a8a"/><rect x="252.400" y="314.2" width="3.600" height="1.600" fill="#7b8a8a"/><rect x="240" y="319" width="16" height="2" fill="#7b8a8a"/><rect x="252.400" y="324.2" width="3.600" height="1.600" fill="#7b8a8a"/><rect x="251" y="329.2" width="5" height="1.600" fill="#7b8a8a"/><rect x="252.400" y="334.2" width="3.600" height="1.600" fill="#7b8a8a"/><rect x="251" y="339.2" width="5" height="1.600" fill="#7b8a8a"/><rect x="252.400" y="344.2" width="3.600" height="1.600" fill="#7b8a8a"/><rect x="251" y="349.2" width="5" height="1.600" fill="#7b8a8a"/><rect x="252.400" y="354.2" width="3.600" height="1.600" fill="#7b8a8a"/><rect x="251" y="359.2" width="5" height="1.600" fill="#7b8a8a"/><rect x="252.400" y="364.2" width="3.600" height="1.600" fill="#7b8a8a"/><rect x="240" y="369" width="16" height="2" fill="#7b8a8a"/><rect x="252.400" y="374.2" width="3.600" height="1.600" fill="#7b8a8a"/><rect x="251" y="379.2" width="5" height="1.600" fill="#7b8a8a"/><rect x="252.400" y="384.2" width="3.600" height="1.600" fill="#7b8a8a"/><rect x="251" y="389.2" width="5" height="1.600" fill="#7b8a8a"/><rect x="252.400" y="394.2" width="3.600" height="1.600" fill="#7b8a8a"/><rect x="251" y="399.2" width="5" height="1.600" fill="#7b8a8a"/><rect x="252.400" y="404.2" width="3.600" height="1.600" fill="#7b8a8a"/><rect x="251" y="409.2" width="5" height="1.600" fill="#7b8a8a"/><rect x="252.400" y="414.2" width="3.600" height="1.600" fill="#7b8a8a"/><rect x="240" y="419" width="16" height="2" fill="#7b8a8a"/><rect x="252.400" y="424.2" width="3.600" height="1.600" fill="#7b8a8a"/><rect x="251" y="429.2" width="5" height="1.600" fill="#7b8a8a"/><rect x="252.400" y="434.2" width="3.600" height="1.600" fill="#7b8a8a"/><rect x="251" y="439.2" width="5" height="1.600" fill="#7b8a8a"/><rect x="252.400" y="444.2" width="3.600" height="1.600" fill="#7b8a8a"/><rect x="251" y="449.2" width="5" height="1.600" fill="#7b8a8a"/><rect x="252.400" y="454.2" width="3.600" height="1.600" fill="#7b8a8a"/><rect x="251" y="459.2" width="5" height="1.600" fill="#7b8a8a"/><rect x="252.400" y="464.2" width="3.600" height="1.600" fill="#7b8a8a"/><rect x="240" y="469" width="16" height="2" fill="#7b8a8a"/><rect x="252.400" y="474.2" width="3.600" height="1.600" fill="#7b8a8a"/><rect x="251" y="479.2" width="5" height="1.600" fill="#7b8a8a"/><rect x="252.400" y="484.2" width="3.600" height="1.600" fill="#7b8a8a"/><rect x="251" y="489.2" width="5" height="1.600" fill="#7b8a8a"/><rect x="252.400" y="494.2" width="3.600" height="1.600" fill="#7b8a8a"/><rect x="251" y="499.2" width="5" height="1.600" fill="#7b8a8a"/></svg>
<div style="position:absolute;left:243px;top:71.2px;width:0;height:0;transform:rotate(90deg);transform-origin:0 0;"><span class="t" style="left:0.00px;top:-11px;font-size:12px;line-height:14px;color:#454545;">0</span></div>
<div style="position:absolute;left:243px;top:121.2px;width:0;height:0;transform:rotate(90deg);transform-origin:0 0;"><span class="t" style="left:-1.00px;top:-11px;font-size:12px;line-height:14px;color:#454545;">50</span></div>
<div style="position:absolute;left:243px;top:171.2px;width:0;height:0;transform:rotate(90deg);transform-origin:0 0;"><span class="t" style="left:-1.00px;top:-11px;font-size:12px;line-height:14px;color:#454545;">100</span></div>
<div style="position:absolute;left:243px;top:221.2px;width:0;height:0;transform:rotate(90deg);transform-origin:0 0;"><span class="t" style="left:-1.00px;top:-11px;font-size:12px;line-height:14px;color:#454545;">150</span></div>
<div style="position:absolute;left:243px;top:271.2px;width:0;height:0;transform:rotate(90deg);transform-origin:0 0;"><span class="t" style="left:0.00px;top:-11px;font-size:12px;line-height:14px;color:#454545;">200</span></div>
<div style="position:absolute;left:243px;top:321.2px;width:0;height:0;transform:rotate(90deg);transform-origin:0 0;"><span class="t" style="left:0.00px;top:-11px;font-size:12px;line-height:14px;color:#454545;">250</span></div>
<div style="position:absolute;left:243px;top:371.2px;width:0;height:0;transform:rotate(90deg);transform-origin:0 0;"><span class="t" style="left:-1.00px;top:-11px;font-size:12px;line-height:14px;color:#454545;">300</span></div>
<div style="position:absolute;left:243px;top:421.2px;width:0;height:0;transform:rotate(90deg);transform-origin:0 0;"><span class="t" style="left:-1.00px;top:-11px;font-size:12px;line-height:14px;color:#454545;">350</span></div>
<div style="position:absolute;left:243px;top:471.2px;width:0;height:0;transform:rotate(90deg);transform-origin:0 0;"><span class="t" style="left:0.00px;top:-11px;font-size:12px;line-height:14px;color:#454545;">400</span></div>
<div style="position:absolute;left:277px;top:52px;width:400px;height:17px;overflow:hidden;background:#f1f1f1"><div style="position:absolute;left:-277px;top:-52px;width:913px;height:589px">
<svg style="left:0px;top:0px" width="913" height="589" viewBox="0 0 913 589" ><rect x="261.2" y="65.300" width="1.600" height="3.700" fill="#a9c5c6"/><rect x="266.2" y="64" width="1.600" height="5" fill="#a9c5c6"/><rect x="271.2" y="65.300" width="1.600" height="3.700" fill="#a9c5c6"/><rect x="276.2" y="64" width="1.600" height="5" fill="#a9c5c6"/><rect x="281.2" y="65.300" width="1.600" height="3.700" fill="#a9c5c6"/><rect x="286.2" y="64" width="1.600" height="5" fill="#a9c5c6"/><rect x="291.2" y="65.300" width="1.600" height="3.700" fill="#a9c5c6"/><rect x="296.2" y="64" width="1.600" height="5" fill="#a9c5c6"/><rect x="301.2" y="65.300" width="1.600" height="3.700" fill="#a9c5c6"/><rect x="306" y="53" width="2" height="16" fill="#a9c5c6"/><rect x="311.2" y="65.300" width="1.600" height="3.700" fill="#a9c5c6"/><rect x="316.2" y="64" width="1.600" height="5" fill="#a9c5c6"/><rect x="321.2" y="65.300" width="1.600" height="3.700" fill="#a9c5c6"/><rect x="326.2" y="64" width="1.600" height="5" fill="#a9c5c6"/><rect x="331.2" y="65.300" width="1.600" height="3.700" fill="#a9c5c6"/><rect x="336.2" y="64" width="1.600" height="5" fill="#a9c5c6"/><rect x="341.2" y="65.300" width="1.600" height="3.700" fill="#a9c5c6"/><rect x="346.2" y="64" width="1.600" height="5" fill="#a9c5c6"/><rect x="351.2" y="65.300" width="1.600" height="3.700" fill="#a9c5c6"/><rect x="356" y="53" width="2" height="16" fill="#a9c5c6"/><rect x="361.2" y="65.300" width="1.600" height="3.700" fill="#a9c5c6"/><rect x="366.2" y="64" width="1.600" height="5" fill="#a9c5c6"/><rect x="371.2" y="65.300" width="1.600" height="3.700" fill="#a9c5c6"/><rect x="376.2" y="64" width="1.600" height="5" fill="#a9c5c6"/><rect x="381.2" y="65.300" width="1.600" height="3.700" fill="#a9c5c6"/><rect x="386.2" y="64" width="1.600" height="5" fill="#a9c5c6"/><rect x="391.2" y="65.300" width="1.600" height="3.700" fill="#a9c5c6"/><rect x="396.2" y="64" width="1.600" height="5" fill="#a9c5c6"/><rect x="401.2" y="65.300" width="1.600" height="3.700" fill="#a9c5c6"/><rect x="406" y="53" width="2" height="16" fill="#a9c5c6"/><rect x="411.2" y="65.300" width="1.600" height="3.700" fill="#a9c5c6"/><rect x="416.2" y="64" width="1.600" height="5" fill="#a9c5c6"/><rect x="421.2" y="65.300" width="1.600" height="3.700" fill="#a9c5c6"/><rect x="426.2" y="64" width="1.600" height="5" fill="#a9c5c6"/><rect x="431.2" y="65.300" width="1.600" height="3.700" fill="#a9c5c6"/><rect x="436.2" y="64" width="1.600" height="5" fill="#a9c5c6"/><rect x="441.2" y="65.300" width="1.600" height="3.700" fill="#a9c5c6"/><rect x="446.2" y="64" width="1.600" height="5" fill="#a9c5c6"/><rect x="451.2" y="65.300" width="1.600" height="3.700" fill="#a9c5c6"/><rect x="456" y="53" width="2" height="16" fill="#a9c5c6"/><rect x="461.2" y="65.300" width="1.600" height="3.700" fill="#a9c5c6"/><rect x="466.2" y="64" width="1.600" height="5" fill="#a9c5c6"/><rect x="471.2" y="65.300" width="1.600" height="3.700" fill="#a9c5c6"/><rect x="476.2" y="64" width="1.600" height="5" fill="#a9c5c6"/><rect x="481.2" y="65.300" width="1.600" height="3.700" fill="#a9c5c6"/><rect x="486.2" y="64" width="1.600" height="5" fill="#a9c5c6"/><rect x="491.2" y="65.300" width="1.600" height="3.700" fill="#a9c5c6"/><rect x="496.2" y="64" width="1.600" height="5" fill="#a9c5c6"/><rect x="501.2" y="65.300" width="1.600" height="3.700" fill="#a9c5c6"/><rect x="506" y="53" width="2" height="16" fill="#a9c5c6"/><rect x="511.2" y="65.300" width="1.600" height="3.700" fill="#a9c5c6"/><rect x="516.2" y="64" width="1.600" height="5" fill="#a9c5c6"/><rect x="521.2" y="65.300" width="1.600" height="3.700" fill="#a9c5c6"/><rect x="526.2" y="64" width="1.600" height="5" fill="#a9c5c6"/><rect x="531.2" y="65.300" width="1.600" height="3.700" fill="#a9c5c6"/><rect x="536.2" y="64" width="1.600" height="5" fill="#a9c5c6"/><rect x="541.2" y="65.300" width="1.600" height="3.700" fill="#a9c5c6"/><rect x="546.2" y="64" width="1.600" height="5" fill="#a9c5c6"/><rect x="551.2" y="65.300" width="1.600" height="3.700" fill="#a9c5c6"/><rect x="556" y="53" width="2" height="16" fill="#a9c5c6"/><rect x="561.2" y="65.300" width="1.600" height="3.700" fill="#a9c5c6"/><rect x="566.2" y="64" width="1.600" height="5" fill="#a9c5c6"/><rect x="571.2" y="65.300" width="1.600" height="3.700" fill="#a9c5c6"/><rect x="576.2" y="64" width="1.600" height="5" fill="#a9c5c6"/><rect x="581.2" y="65.300" width="1.600" height="3.700" fill="#a9c5c6"/><rect x="586.2" y="64" width="1.600" height="5" fill="#a9c5c6"/><rect x="591.2" y="65.300" width="1.600" height="3.700" fill="#a9c5c6"/><rect x="596.2" y="64" width="1.600" height="5" fill="#a9c5c6"/><rect x="601.2" y="65.300" width="1.600" height="3.700" fill="#a9c5c6"/><rect x="606" y="53" width="2" height="16" fill="#a9c5c6"/><rect x="611.2" y="65.300" width="1.600" height="3.700" fill="#a9c5c6"/><rect x="616.2" y="64" width="1.600" height="5" fill="#a9c5c6"/><rect x="621.2" y="65.300" width="1.600" height="3.700" fill="#a9c5c6"/><rect x="626.2" y="64" width="1.600" height="5" fill="#a9c5c6"/><rect x="631.2" y="65.300" width="1.600" height="3.700" fill="#a9c5c6"/><rect x="636.2" y="64" width="1.600" height="5" fill="#a9c5c6"/><rect x="641.2" y="65.300" width="1.600" height="3.700" fill="#a9c5c6"/><rect x="646.2" y="64" width="1.600" height="5" fill="#a9c5c6"/><rect x="651.2" y="65.300" width="1.600" height="3.700" fill="#a9c5c6"/><rect x="656" y="53" width="2" height="16" fill="#a9c5c6"/><rect x="661.2" y="65.300" width="1.600" height="3.700" fill="#a9c5c6"/><rect x="666.2" y="64" width="1.600" height="5" fill="#a9c5c6"/><rect x="671.2" y="65.300" width="1.600" height="3.700" fill="#a9c5c6"/><rect x="676.2" y="64" width="1.600" height="5" fill="#a9c5c6"/><rect x="681.2" y="65.300" width="1.600" height="3.700" fill="#a9c5c6"/><rect x="686.2" y="64" width="1.600" height="5" fill="#a9c5c6"/><rect x="691.2" y="65.300" width="1.600" height="3.700" fill="#a9c5c6"/><rect x="696.2" y="64" width="1.600" height="5" fill="#a9c5c6"/><rect x="701.2" y="65.300" width="1.600" height="3.700" fill="#a9c5c6"/><rect x="706" y="53" width="2" height="16" fill="#a9c5c6"/><rect x="711.2" y="65.300" width="1.600" height="3.700" fill="#a9c5c6"/><rect x="716.2" y="64" width="1.600" height="5" fill="#a9c5c6"/><rect x="721.2" y="65.300" width="1.600" height="3.700" fill="#a9c5c6"/><rect x="726.2" y="64" width="1.600" height="5" fill="#a9c5c6"/><rect x="731.2" y="65.300" width="1.600" height="3.700" fill="#a9c5c6"/><rect x="736.2" y="64" width="1.600" height="5" fill="#a9c5c6"/><rect x="741.2" y="65.300" width="1.600" height="3.700" fill="#a9c5c6"/><rect x="746.2" y="64" width="1.600" height="5" fill="#a9c5c6"/><rect x="751.2" y="65.300" width="1.600" height="3.700" fill="#a9c5c6"/><rect x="756" y="53" width="2" height="16" fill="#a9c5c6"/><rect x="761.2" y="65.300" width="1.600" height="3.700" fill="#a9c5c6"/><rect x="766.2" y="64" width="1.600" height="5" fill="#a9c5c6"/><rect x="771.2" y="65.300" width="1.600" height="3.700" fill="#a9c5c6"/><rect x="776.2" y="64" width="1.600" height="5" fill="#a9c5c6"/><rect x="781.2" y="65.300" width="1.600" height="3.700" fill="#a9c5c6"/><rect x="786.2" y="64" width="1.600" height="5" fill="#a9c5c6"/><rect x="791.2" y="65.300" width="1.600" height="3.700" fill="#a9c5c6"/><rect x="796.2" y="64" width="1.600" height="5" fill="#a9c5c6"/><rect x="801.2" y="65.300" width="1.600" height="3.700" fill="#a9c5c6"/><rect x="806" y="53" width="2" height="16" fill="#a9c5c6"/><rect x="811.2" y="65.300" width="1.600" height="3.700" fill="#a9c5c6"/><rect x="816.2" y="64" width="1.600" height="5" fill="#a9c5c6"/><rect x="821.2" y="65.300" width="1.600" height="3.700" fill="#a9c5c6"/><rect x="826.2" y="64" width="1.600" height="5" fill="#a9c5c6"/><rect x="831.2" y="65.300" width="1.600" height="3.700" fill="#a9c5c6"/><rect x="836.2" y="64" width="1.600" height="5" fill="#a9c5c6"/><rect x="841.2" y="65.300" width="1.600" height="3.700" fill="#a9c5c6"/><rect x="846.2" y="64" width="1.600" height="5" fill="#a9c5c6"/><rect x="851.2" y="65.300" width="1.600" height="3.700" fill="#a9c5c6"/><rect x="856" y="53" width="2" height="16" fill="#a9c5c6"/><rect x="861.2" y="65.300" width="1.600" height="3.700" fill="#a9c5c6"/><rect x="866.2" y="64" width="1.600" height="5" fill="#a9c5c6"/><rect x="871.2" y="65.300" width="1.600" height="3.700" fill="#a9c5c6"/><rect x="876.2" y="64" width="1.600" height="5" fill="#a9c5c6"/><rect x="881.2" y="65.300" width="1.600" height="3.700" fill="#a9c5c6"/><rect x="886.2" y="64" width="1.600" height="5" fill="#a9c5c6"/><rect x="891.2" y="65.300" width="1.600" height="3.700" fill="#a9c5c6"/><rect x="896.2" y="64" width="1.600" height="5" fill="#a9c5c6"/><rect x="901.2" y="65.300" width="1.600" height="3.700" fill="#a9c5c6"/><rect x="906" y="53" width="2" height="16" fill="#a9c5c6"/><rect x="911.2" y="65.300" width="1.600" height="3.700" fill="#a9c5c6"/></svg>
<span class="t" style="left:258.70px;top:51px;font-size:12px;line-height:14px;color:#9bb9bd;">0</span>
<span class="t" style="left:307.80px;top:51px;font-size:12px;line-height:14px;color:#9bb9bd;">50</span>
<span class="t" style="left:357.80px;top:51px;font-size:12px;line-height:14px;color:#9bb9bd;">100</span>
<span class="t" style="left:407.80px;top:51px;font-size:12px;line-height:14px;color:#9bb9bd;">150</span>
<span class="t" style="left:458.80px;top:51px;font-size:12px;line-height:14px;color:#9bb9bd;">200</span>
<span class="t" style="left:508.80px;top:51px;font-size:12px;line-height:14px;color:#9bb9bd;">250</span>
<span class="t" style="left:557.80px;top:51px;font-size:12px;line-height:14px;color:#9bb9bd;">300</span>
<span class="t" style="left:607.80px;top:51px;font-size:12px;line-height:14px;color:#9bb9bd;">350</span>
<span class="t" style="left:658.80px;top:51px;font-size:12px;line-height:14px;color:#9bb9bd;">400</span>
<span class="t" style="left:708.80px;top:51px;font-size:12px;line-height:14px;color:#9bb9bd;">450</span>
<span class="t" style="left:757.80px;top:51px;font-size:12px;line-height:14px;color:#9bb9bd;">500</span>
<span class="t" style="left:807.80px;top:51px;font-size:12px;line-height:14px;color:#9bb9bd;">550</span>
<span class="t" style="left:858.80px;top:51px;font-size:12px;line-height:14px;color:#9bb9bd;">600</span>
<span class="t" style="left:908.80px;top:51px;font-size:12px;line-height:14px;color:#9bb9bd;">650</span>
</div></div>
<div style="position:absolute;left:239px;top:90px;width:17px;height:240px;overflow:hidden;background:#f1f1f1"><div style="position:absolute;left:-239px;top:-90px;width:913px;height:589px">
<svg style="left:0px;top:0px" width="913" height="589" viewBox="0 0 913 589" ><rect x="252.400" y="74.2" width="3.600" height="1.600" fill="#a9c5c6"/><rect x="251" y="79.2" width="5" height="1.600" fill="#a9c5c6"/><rect x="252.400" y="84.2" width="3.600" height="1.600" fill="#a9c5c6"/><rect x="251" y="89.2" width="5" height="1.600" fill="#a9c5c6"/><rect x="252.400" y="94.2" width="3.600" height="1.600" fill="#a9c5c6"/><rect x="251" y="99.2" width="5" height="1.600" fill="#a9c5c6"/><rect x="252.400" y="104.2" width="3.600" height="1.600" fill="#a9c5c6"/><rect x="251" y="109.2" width="5" height="1.600" fill="#a9c5c6"/><rect x="252.400" y="114.2" width="3.600" height="1.600" fill="#a9c5c6"/><rect x="240" y="119" width="16" height="2" fill="#a9c5c6"/><rect x="252.400" y="124.2" width="3.600" height="1.600" fill="#a9c5c6"/><rect x="251" y="129.2" width="5" height="1.600" fill="#a9c5c6"/><rect x="252.400" y="134.2" width="3.600" height="1.600" fill="#a9c5c6"/><rect x="251" y="139.2" width="5" height="1.600" fill="#a9c5c6"/><rect x="252.400" y="144.2" width="3.600" height="1.600" fill="#a9c5c6"/><rect x="251" y="149.2" width="5" height="1.600" fill="#a9c5c6"/><rect x="252.400" y="154.2" width="3.600" height="1.600" fill="#a9c5c6"/><rect x="251" y="159.2" width="5" height="1.600" fill="#a9c5c6"/><rect x="252.400" y="164.2" width="3.600" height="1.600" fill="#a9c5c6"/><rect x="240" y="169" width="16" height="2" fill="#a9c5c6"/><rect x="252.400" y="174.2" width="3.600" height="1.600" fill="#a9c5c6"/><rect x="251" y="179.2" width="5" height="1.600" fill="#a9c5c6"/><rect x="252.400" y="184.2" width="3.600" height="1.600" fill="#a9c5c6"/><rect x="251" y="189.2" width="5" height="1.600" fill="#a9c5c6"/><rect x="252.400" y="194.2" width="3.600" height="1.600" fill="#a9c5c6"/><rect x="251" y="199.2" width="5" height="1.600" fill="#a9c5c6"/><rect x="252.400" y="204.2" width="3.600" height="1.600" fill="#a9c5c6"/><rect x="251" y="209.2" width="5" height="1.600" fill="#a9c5c6"/><rect x="252.400" y="214.2" width="3.600" height="1.600" fill="#a9c5c6"/><rect x="240" y="219" width="16" height="2" fill="#a9c5c6"/><rect x="252.400" y="224.2" width="3.600" height="1.600" fill="#a9c5c6"/><rect x="251" y="229.2" width="5" height="1.600" fill="#a9c5c6"/><rect x="252.400" y="234.2" width="3.600" height="1.600" fill="#a9c5c6"/><rect x="251" y="239.2" width="5" height="1.600" fill="#a9c5c6"/><rect x="252.400" y="244.2" width="3.600" height="1.600" fill="#a9c5c6"/><rect x="251" y="249.2" width="5" height="1.600" fill="#a9c5c6"/><rect x="252.400" y="254.2" width="3.600" height="1.600" fill="#a9c5c6"/><rect x="251" y="259.2" width="5" height="1.600" fill="#a9c5c6"/><rect x="252.400" y="264.2" width="3.600" height="1.600" fill="#a9c5c6"/><rect x="240" y="269" width="16" height="2" fill="#a9c5c6"/><rect x="252.400" y="274.2" width="3.600" height="1.600" fill="#a9c5c6"/><rect x="251" y="279.2" width="5" height="1.600" fill="#a9c5c6"/><rect x="252.400" y="284.2" width="3.600" height="1.600" fill="#a9c5c6"/><rect x="251" y="289.2" width="5" height="1.600" fill="#a9c5c6"/><rect x="252.400" y="294.2" width="3.600" height="1.600" fill="#a9c5c6"/><rect x="251" y="299.2" width="5" height="1.600" fill="#a9c5c6"/><rect x="252.400" y="304.2" width="3.600" height="1.600" fill="#a9c5c6"/><rect x="251" y="309.2" width="5" height="1.600" fill="#a9c5c6"/><rect x="252.400" y="314.2" width="3.600" height="1.600" fill="#a9c5c6"/><rect x="240" y="319" width="16" height="2" fill="#a9c5c6"/><rect x="252.400" y="324.2" width="3.600" height="1.600" fill="#a9c5c6"/><rect x="251" y="329.2" width="5" height="1.600" fill="#a9c5c6"/><rect x="252.400" y="334.2" width="3.600" height="1.600" fill="#a9c5c6"/><rect x="251" y="339.2" width="5" height="1.600" fill="#a9c5c6"/><rect x="252.400" y="344.2" width="3.600" height="1.600" fill="#a9c5c6"/><rect x="251" y="349.2" width="5" height="1.600" fill="#a9c5c6"/><rect x="252.400" y="354.2" width="3.600" height="1.600" fill="#a9c5c6"/><rect x="251" y="359.2" width="5" height="1.600" fill="#a9c5c6"/><rect x="252.400" y="364.2" width="3.600" height="1.600" fill="#a9c5c6"/><rect x="240" y="369" width="16" height="2" fill="#a9c5c6"/><rect x="252.400" y="374.2" width="3.600" height="1.600" fill="#a9c5c6"/><rect x="251" y="379.2" width="5" height="1.600" fill="#a9c5c6"/><rect x="252.400" y="384.2" width="3.600" height="1.600" fill="#a9c5c6"/><rect x="251" y="389.2" width="5" height="1.600" fill="#a9c5c6"/><rect x="252.400" y="394.2" width="3.600" height="1.600" fill="#a9c5c6"/><rect x="251" y="399.2" width="5" height="1.600" fill="#a9c5c6"/><rect x="252.400" y="404.2" width="3.600" height="1.600" fill="#a9c5c6"/><rect x="251" y="409.2" width="5" height="1.600" fill="#a9c5c6"/><rect x="252.400" y="414.2" width="3.600" height="1.600" fill="#a9c5c6"/><rect x="240" y="419" width="16" height="2" fill="#a9c5c6"/><rect x="252.400" y="424.2" width="3.600" height="1.600" fill="#a9c5c6"/><rect x="251" y="429.2" width="5" height="1.600" fill="#a9c5c6"/><rect x="252.400" y="434.2" width="3.600" height="1.600" fill="#a9c5c6"/><rect x="251" y="439.2" width="5" height="1.600" fill="#a9c5c6"/><rect x="252.400" y="444.2" width="3.600" height="1.600" fill="#a9c5c6"/><rect x="251" y="449.2" width="5" height="1.600" fill="#a9c5c6"/><rect x="252.400" y="454.2" width="3.600" height="1.600" fill="#a9c5c6"/><rect x="251" y="459.2" width="5" height="1.600" fill="#a9c5c6"/><rect x="252.400" y="464.2" width="3.600" height="1.600" fill="#a9c5c6"/><rect x="240" y="469" width="16" height="2" fill="#a9c5c6"/><rect x="252.400" y="474.2" width="3.600" height="1.600" fill="#a9c5c6"/><rect x="251" y="479.2" width="5" height="1.600" fill="#a9c5c6"/><rect x="252.400" y="484.2" width="3.600" height="1.600" fill="#a9c5c6"/><rect x="251" y="489.2" width="5" height="1.600" fill="#a9c5c6"/><rect x="252.400" y="494.2" width="3.600" height="1.600" fill="#a9c5c6"/><rect x="251" y="499.2" width="5" height="1.600" fill="#a9c5c6"/></svg>
<div style="position:absolute;left:243px;top:71.2px;width:0;height:0;transform:rotate(90deg);transform-origin:0 0;"><span class="t" style="left:0.00px;top:-11px;font-size:12px;line-height:14px;color:#9bb9bd;">0</span></div>
<div style="position:absolute;left:243px;top:121.2px;width:0;height:0;transform:rotate(90deg);transform-origin:0 0;"><span class="t" style="left:-1.00px;top:-11px;font-size:12px;line-height:14px;color:#9bb9bd;">50</span></div>
<div style="position:absolute;left:243px;top:171.2px;width:0;height:0;transform:rotate(90deg);transform-origin:0 0;"><span class="t" style="left:-1.00px;top:-11px;font-size:12px;line-height:14px;color:#9bb9bd;">100</span></div>
<div style="position:absolute;left:243px;top:221.2px;width:0;height:0;transform:rotate(90deg);transform-origin:0 0;"><span class="t" style="left:-1.00px;top:-11px;font-size:12px;line-height:14px;color:#9bb9bd;">150</span></div>
<div style="position:absolute;left:243px;top:271.2px;width:0;height:0;transform:rotate(90deg);transform-origin:0 0;"><span class="t" style="left:0.00px;top:-11px;font-size:12px;line-height:14px;color:#9bb9bd;">200</span></div>
<div style="position:absolute;left:243px;top:321.2px;width:0;height:0;transform:rotate(90deg);transform-origin:0 0;"><span class="t" style="left:0.00px;top:-11px;font-size:12px;line-height:14px;color:#9bb9bd;">250</span></div>
<div style="position:absolute;left:243px;top:371.2px;width:0;height:0;transform:rotate(90deg);transform-origin:0 0;"><span class="t" style="left:-1.00px;top:-11px;font-size:12px;line-height:14px;color:#9bb9bd;">300</span></div>
<div style="position:absolute;left:243px;top:421.2px;width:0;height:0;transform:rotate(90deg);transform-origin:0 0;"><span class="t" style="left:-1.00px;top:-11px;font-size:12px;line-height:14px;color:#9bb9bd;">350</span></div>
<div style="position:absolute;left:243px;top:471.2px;width:0;height:0;transform:rotate(90deg);transform-origin:0 0;"><span class="t" style="left:0.00px;top:-11px;font-size:12px;line-height:14px;color:#9bb9bd;">400</span></div>
</div></div>
<div style="position:absolute;left:238px;top:69px;width:675px;height:1px;background:#5f6666;"></div>
<div style="position:absolute;left:256px;top:52px;width:1px;height:453px;background:#5f6666;"></div>
<svg style="left:257px;top:70px" width="640" height="435" viewBox="0 0 640 435"><defs><pattern id="dots" x="0" y="0" width="20" height="20" patternUnits="userSpaceOnUse"><rect x="0" y="0" width="1" height="1" fill="#8d8d8d"/></pattern></defs><rect x="0" y="0" width="621" height="436" fill="url(#dots)"/></svg>
<div style="position:absolute;left:260px;top:72px;width:15px;height:15px;background:#f9f9f9;border:1px solid #e3e3e3;"></div>
<svg style="left:262px;top:74px" width="13" height="13" viewBox="0 0 13 13" ><g fill="none" stroke="#5b6b7b" stroke-width="1.100"><path d="M6.500 0.800 V12.200 M0.800 6.500 H12.200"/><path d="M4.600 2.800 L6.500 0.800 L8.400 2.800 M4.600 10.200 L6.500 12.200 L8.400 10.200 M2.800 4.600 L0.800 6.500 L2.800 8.400 M10.200 4.600 L12.200 6.500 L10.200 8.400"/></g></svg>
<div style="position:absolute;left:277px;top:90px;width:400px;height:240px;background:#fff;"></div>
<svg style="left:0px;top:0px" width="913" height="589" viewBox="0 0 913 589" ><rect x="276" y="89" width="402" height="242" fill="none" stroke="#ec6e19" stroke-width="2" stroke-dasharray="2 2"/></svg>
<div style="position:absolute;left:272px;top:85px;width:8px;height:8px;background:#ec6e19;"></div>
<div style="position:absolute;left:473px;top:85px;width:8px;height:8px;background:#ec6e19;"></div>
<div style="position:absolute;left:674px;top:85px;width:8px;height:8px;background:#ec6e19;"></div>
<div style="position:absolute;left:272px;top:206px;width:8px;height:8px;background:#ec6e19;"></div>
<div style="position:absolute;left:674px;top:206px;width:8px;height:8px;background:#ec6e19;"></div>
<div style="position:absolute;left:272px;top:327px;width:8px;height:8px;background:#ec6e19;"></div>
<div style="position:absolute;left:473px;top:327px;width:8px;height:8px;background:#ec6e19;"></div>
<div style="position:absolute;left:674px;top:327px;width:8px;height:8px;background:#ec6e19;"></div>
<div style="position:absolute;left:473px;top:115px;width:8px;height:5px;background:#f08a2c;"></div>
<span class="t" style="left:289.90px;top:104px;font-size:10.5px;line-height:13px;color:#1d1d1d;font-weight:700;letter-spacing:-0.375px;">Chart</span>
<div style="position:absolute;left:288px;top:123px;width:12px;height:193px;background:#f5cdba;border:1px solid #e2682a;"></div>
<div style="position:absolute;left:299.300px;top:254.800px;width:0;height:0;transform:rotate(-90deg);transform-origin:0 0;"><span class="t" style="left:0.00px;top:-10px;font-size:11px;line-height:13px;color:#3a3a3a;letter-spacing:0.108px;">Customer:City</span></div>
<svg style="left:0px;top:0px" width="913" height="589" viewBox="0 0 913 589" ><rect x="375" y="122.900" width="1" height="193.200" fill="#e4e4e4"/><rect x="376" y="122.90" width="208" height="6.90" fill="#dfe1e0"/><rect x="376" y="129.80" width="208" height="6.90" fill="#8e64bc"/><rect x="376" y="136.70" width="208" height="6.90" fill="#4c8ab9"/><rect x="376" y="143.60" width="208" height="6.90" fill="#d64541"/><rect x="376" y="150.50" width="208" height="13.80" fill="#bfe1f3"/><rect x="376" y="157.40" width="208" height="6.90" fill="#bfe1f3"/><rect x="376" y="164.30" width="208" height="6.90" fill="#f9a6a5"/><rect x="376" y="171.20" width="208" height="6.90" fill="#8e64bc"/><rect x="376" y="178.10" width="208" height="6.90" fill="#f98e2b"/><rect x="376" y="185.00" width="208" height="6.90" fill="#c1e1f4"/><rect x="376" y="191.90" width="208" height="6.90" fill="#8e64bc"/><rect x="376" y="198.80" width="208" height="6.90" fill="#969c9c"/><rect x="376" y="205.70" width="208" height="6.90" fill="#8e64bc"/><rect x="376" y="212.60" width="208" height="6.90" fill="#8e64bc"/><rect x="376" y="219.50" width="208" height="6.90" fill="#bfe1f3"/><rect x="376" y="226.40" width="208" height="6.90" fill="#b48cd1"/><rect x="376" y="233.30" width="208" height="6.90" fill="#1db0fb"/><rect x="376" y="240.20" width="208" height="6.90" fill="#aee096"/><rect x="376" y="247.10" width="208" height="6.90" fill="#60a440"/><rect x="376" y="254.00" width="208" height="6.90" fill="#1db0fb"/><rect x="376" y="260.90" width="208" height="6.90" fill="#fbe2a8"/><rect x="376" y="267.80" width="208" height="6.90" fill="#8e64bc"/><rect x="376" y="274.70" width="208" height="6.90" fill="#d64541"/><rect x="376" y="281.60" width="208" height="6.90" fill="#60a440"/><rect x="376" y="288.50" width="208" height="6.90" fill="#d64541"/><rect x="376" y="295.40" width="208" height="6.90" fill="#f9a6a5"/><rect x="376" y="302.30" width="208" height="6.90" fill="#1db0fb"/><rect x="376" y="309.20" width="208" height="6.90" fill="#bfe1f3"/><rect x="376" y="212.30" width="208" height="0.600" fill="#a886cc"/></svg>
<span class="t" style="left:343.40px;top:127px;font-size:10px;line-height:12px;color:#444;letter-spacing:-0.350px;">Wayne</span>
<span class="t" style="left:326.10px;top:141px;font-size:10px;line-height:12px;color:#444;letter-spacing:-0.010px;">Springfield</span>
<span class="t" style="left:310.90px;top:155px;font-size:10px;line-height:12px;color:#444;letter-spacing:-0.158px;">San Francisco</span>
<span class="t" style="left:334.20px;top:168px;font-size:10px;line-height:12px;color:#444;letter-spacing:-0.133px;">Plainfield</span>
<span class="t" style="left:337.30px;top:182px;font-size:10px;line-height:12px;color:#444;letter-spacing:-0.217px;">Olympia</span>
<span class="t" style="left:330.80px;top:196px;font-size:10px;line-height:12px;color:#444;letter-spacing:0.029px;">New York</span>
<span class="t" style="left:320.20px;top:210px;font-size:10px;line-height:12px;color:#444;letter-spacing:0.311px;">Middletown</span>
<span class="t" style="left:328.20px;top:223px;font-size:10px;line-height:12px;color:#444;letter-spacing:-0.275px;">Las Vegas</span>
<span class="t" style="left:336.80px;top:237px;font-size:10px;line-height:12px;color:#444;letter-spacing:0.029px;">Hartford</span>
<span class="t" style="left:346.30px;top:251px;font-size:10px;line-height:12px;color:#444;letter-spacing:-0.260px;">Dallas</span>
<span class="t" style="left:335.50px;top:265px;font-size:10px;line-height:12px;color:#444;letter-spacing:0.100px;">Camden</span>
<span class="t" style="left:338.50px;top:279px;font-size:10px;line-height:12px;color:#444;letter-spacing:-0.083px;">Boulder</span>
<span class="t" style="left:331.50px;top:293px;font-size:10px;line-height:12px;color:#444;letter-spacing:-0.062px;">Baltimore</span>
<span class="t" style="left:342.40px;top:306px;font-size:10px;line-height:12px;color:#444;letter-spacing:-0.080px;">Albany</span>
<div style="position:absolute;left:588px;top:122.5px;width:75.5px;height:12.5px;background:#fff;border:1px solid #ececec;"></div>
<div style="position:absolute;left:588px;top:136px;width:75.5px;height:108px;background:#fff;border:1px solid #ececec;"></div>
<span class="t" style="left:590.20px;top:124px;font-size:10px;line-height:12px;color:#444;letter-spacing:-0.092px;">Customer:State</span>
<svg style="left:590.4px;top:141.1px" width="12" height="12" viewBox="0 0 12 12" ><rect width="11.700" height="11.700" fill="#4c8ab9"/></svg>
<svg style="left:627px;top:141.1px" width="12" height="12" viewBox="0 0 12 12" ><rect width="11.700" height="11.700" fill="#f9a6a5"/></svg>
<span class="t" style="left:607.30px;top:141px;font-size:10px;line-height:12px;color:#444;">AZ</span>
<span class="t" style="left:643.20px;top:141px;font-size:10px;line-height:12px;color:#444;">MD</span>
<svg style="left:590.4px;top:156.1px" width="12" height="12" viewBox="0 0 12 12" ><rect width="11.700" height="11.700" fill="#bfe1f3"/></svg>
<svg style="left:627px;top:156.1px" width="12" height="12" viewBox="0 0 12 12" ><rect width="11.700" height="11.700" fill="#8e64bc"/></svg>
<span class="t" style="left:607.30px;top:156px;font-size:10px;line-height:12px;color:#444;">CA</span>
<span class="t" style="left:643.20px;top:156px;font-size:10px;line-height:12px;color:#444;">NJ</span>
<svg style="left:590.4px;top:171.1px" width="12" height="12" viewBox="0 0 12 12" ><rect width="11.700" height="11.700" fill="#60a440"/></svg>
<svg style="left:627px;top:171.1px" width="12" height="12" viewBox="0 0 12 12" ><rect width="11.700" height="11.700" fill="#b48cd1"/></svg>
<span class="t" style="left:607.30px;top:171px;font-size:10px;line-height:12px;color:#444;">CO</span>
<span class="t" style="left:643.20px;top:171px;font-size:10px;line-height:12px;color:#444;">NV</span>
<svg style="left:590.4px;top:186.1px" width="12" height="12" viewBox="0 0 12 12" ><rect width="11.700" height="11.700" fill="#aee096"/></svg>
<svg style="left:627px;top:186.1px" width="12" height="12" viewBox="0 0 12 12" ><rect width="11.700" height="11.700" fill="#969c9c"/></svg>
<span class="t" style="left:607.30px;top:186px;font-size:10px;line-height:12px;color:#444;">CT</span>
<span class="t" style="left:643.20px;top:186px;font-size:10px;line-height:12px;color:#444;">NY</span>
<svg style="left:590.4px;top:201.1px" width="12" height="12" viewBox="0 0 12 12" ><rect width="11.700" height="11.700" fill="#f98e2b"/></svg>
<svg style="left:627px;top:201.1px" width="12" height="12" viewBox="0 0 12 12" ><rect width="11.700" height="11.700" fill="#dfe1e0"/></svg>
<span class="t" style="left:606.30px;top:201px;font-size:10px;line-height:12px;color:#444;">FL</span>
<span class="t" style="left:643.20px;top:201px;font-size:10px;line-height:12px;color:#444;">PA</span>
<svg style="left:590.4px;top:216.1px" width="12" height="12" viewBox="0 0 12 12" ><rect width="11.700" height="11.700" fill="#fbe2a8"/></svg>
<svg style="left:627px;top:216.1px" width="12" height="12" viewBox="0 0 12 12" ><rect width="11.700" height="11.700" fill="#1db0fb"/></svg>
<span class="t" style="left:606.30px;top:216px;font-size:10px;line-height:12px;color:#444;">IL</span>
<span class="t" style="left:644.20px;top:216px;font-size:10px;line-height:12px;color:#444;">TX</span>
<svg style="left:590.4px;top:231.1px" width="12" height="12" viewBox="0 0 12 12" ><rect width="11.700" height="11.700" fill="#d64541"/></svg>
<svg style="left:627px;top:231.1px" width="12" height="12" viewBox="0 0 12 12" ><rect width="11.700" height="11.700" fill="#c1e1f4"/></svg>
<span class="t" style="left:606.30px;top:231px;font-size:10px;line-height:12px;color:#444;">MA</span>
<span class="t" style="left:644.20px;top:231px;font-size:10px;line-height:12px;color:#444;">WA</span>
<div style="position:absolute;left:257px;top:488px;width:656px;height:17px;background:#f3f3f3;"></div>
<div style="position:absolute;left:896px;top:70px;width:17px;height:435px;background:#f3f3f3;"></div>
<svg style="left:0px;top:0px" width="913" height="589" viewBox="0 0 913 589" ><path fill="#a3a3a3" d="M900.700 81 L904.300 77 L907.900 81 Z"/><path fill="#4a4a4a" d="M900.600 477 H908 L904.300 481.200 Z"/><path fill="#a3a3a3" d="M267.400 492.300 V500.700 L263.100 496.500 Z"/><path fill="#4a4a4a" d="M886 492.400 V500.800 L890.400 496.600 Z"/></svg>
<div style="position:absolute;left:898px;top:87px;width:13px;height:17px;background:#c1c1c1;"></div>
<div style="position:absolute;left:274px;top:490px;width:39px;height:13px;background:#c1c1c1;"></div>
<div style="position:absolute;left:896px;top:488px;width:17px;height:17px;background:#dcdcdc;"></div>
<span class="t" style="left:257.40px;top:518px;font-size:12.5px;line-height:15px;color:#333;">Chart1 =&gt; </span>
<span class="t" style="left:318.00px;top:518px;font-size:12.5px;line-height:15px;color:#1d1d1d;font-weight:700;letter-spacing:-0.182px;">axisTitle[y]</span>
<span class="t" style="left:538.40px;top:518px;font-size:12.5px;line-height:15px;color:#333;letter-spacing:0.233px;">Chart1[Order Model]</span>
<div style="position:absolute;left:760px;top:512px;width:69px;height:25px;background:#ec6e19;border-radius:3px;"></div>
<span class="t" style="left:768.80px;top:518px;font-size:11px;line-height:13px;color:#fff;letter-spacing:-0.333px;-webkit-text-stroke:0.35px #fff;">Console</span>
<div style="position:absolute;left:810px;top:519px;width:10px;height:10px;background:#fff;border-radius:4.5px;"></div>
<span class="t" style="left:812.70px;top:519px;font-size:8.5px;line-height:10px;color:#333;-webkit-text-stroke:0.25px #333;">0</span>
<div style="position:absolute;left:239px;top:543px;width:146px;height:5px;background:#ec6e19;"></div>
<svg style="left:258.4px;top:553px" width="14" height="14" viewBox="0 0 14 14" ><g fill="#696969"><rect x="0" y="0" width="5.800" height="8.200"/><rect x="0" y="9.600" width="5.800" height="4.400"/><rect x="7.400" y="0" width="6.600" height="4.400"/><rect x="7.400" y="5.800" width="6.600" height="8.200"/></g></svg>
<span class="t" style="left:276.40px;top:553px;font-size:12.5px;line-height:15px;color:#1d1d1d;font-weight:700;letter-spacing:0.222px;">Untitled-2</span>
<span class="t" style="left:339.40px;top:559px;font-size:13.5px;line-height:16px;color:#1d1d1d;">*</span>
<svg style="left:351px;top:552px" width="15" height="15" viewBox="0 0 15 15" ><rect x="0.700" y="0.700" width="13.300" height="13.100" fill="none" stroke="#444" stroke-width="1.300"/><path d="M3.800 3.800 L10.900 10.800 M10.900 3.800 L3.800 10.800" stroke="#444" stroke-width="1.300" fill="none"/></svg>
<svg style="left:0px;top:0px" width="913" height="589" viewBox="0 0 913 589" ><defs><filter id="sh" x="-20%" y="-20%" width="150%" height="150%"><feDropShadow dx="2.400" dy="3" stdDeviation="1.900" flood-color="#000" flood-opacity="0.600"/></filter></defs>
<g filter="url(#sh)">
<rect x="130.600" y="532.700" width="102.800" height="52.700" rx="8" ry="8" fill="none" stroke="#fe0000" stroke-width="5.600"/>
<path d="M226.600 482.800 A1.900 1.900 0 0 1 229.400 485.400 L201.200 518.200 L208.600 520.500 L182.800 528.900 L191.400 503.900 L195.600 513.400 Z" fill="#fe0000"/>
<path d="M344.600 343.500 A1.900 1.900 0 0 1 341.900 346.300 L310.600 319.100 L307.400 326.900 L298.700 301.700 L324.200 310.200 L316.200 313.200 Z" fill="#fe0000"/>
</g></svg>
</body></html>
